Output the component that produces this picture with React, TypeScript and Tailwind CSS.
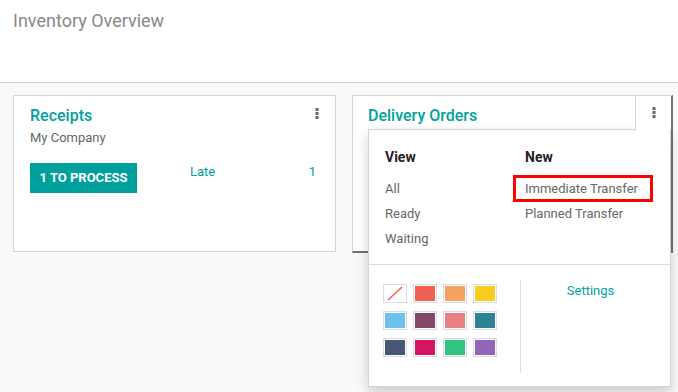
import React from "react";

const Dots = () => (
  <svg width="4" height="11" viewBox="0 0 4 11" className="block">
    <rect x="0.5" y="0" width="3" height="3" fill="#666" />
    <rect x="0.5" y="4" width="3" height="3" fill="#666" />
    <rect x="0.5" y="8" width="3" height="3" fill="#666" />
  </svg>
);

const colors = [
  "none",
  "#F06050",
  "#F4A460",
  "#F7CD1F",
  "#6CC1ED",
  "#814968",
  "#EB7E7F",
  "#2C8397",
  "#475577",
  "#D6145F",
  "#30C381",
  "#9365B8",
];

export default function App() {
  return (
    <div
      className="w-[678px] h-[392px] overflow-hidden bg-[#f9f9f9] flex flex-col"
      style={{ fontFamily: "Roboto, 'Noto Sans', sans-serif" }}
    >
      <div className="h-[83px] shrink-0 bg-white border-b border-[#cfcfcf] pl-[13px] pt-[8px]">
        <div className="text-[18px] leading-[26px] text-[#888]">Inventory Overview</div>
      </div>
      <div className="flex gap-[16px] pl-[13px] pt-[12px]">
        {/* Card 1 */}
        <div className="w-[323px] h-[157px] bg-white border border-[#d4d4d4] relative pl-[16px] pt-[9px]">
          <div className="absolute right-[16px] top-[12px]">
            <Dots />
          </div>
          <div className="text-[16px] leading-[22px] font-medium text-[#00A09D]">Receipts</div>
          <div className="text-[13px] leading-[20px] text-[#666] mt-[1px]">My Company</div>
          <div className="flex mt-[15px]">
            <div className="w-[107px] h-[30px] bg-[#00A09D] text-white text-[13px] font-bold flex items-center justify-center">
              1 TO PROCESS
            </div>
            <div className="ml-[53px] text-[13px] text-[#00A09D] leading-[18px]">Late</div>
            <div className="ml-auto mr-[19px] text-[13px] text-[#00A09D] leading-[18px]">1</div>
          </div>
        </div>
        {/* Card 2 */}
        <div className="w-[321px] h-[158px] bg-white border-t border-l border-[#d4d4d4] border-r-2 border-b-2 border-r-[#6f747c] border-b-[#6f747c] relative pl-[15px] pt-[9px]">
          <div className="text-[16px] leading-[22px] font-medium text-[#00A09D]">Delivery Orders</div>
          {/* toggle */}
          <div className="absolute right-0 top-0 w-[36px] h-[34px] bg-white border-l border-[#d4d4d4] z-20 flex justify-center pt-[11px]">
            <Dots />
          </div>
          {/* dropdown */}
          <div className="absolute left-[15px] top-[33px] w-[303px] h-[258px] bg-white border border-[#d4d4d4] shadow-[0_6px_12px_rgba(0,0,0,0.175)] z-10">
            <div className="flex h-[134px]">
              <div className="w-[140px] pl-[16px] pt-[18px]">
                <div className="text-[14px] font-bold text-[#222] leading-[18px]">View</div>
                <div className="mt-[10px] flex flex-col text-[13px] text-[#666] leading-[25px]">
                  <span>All</span>
                  <span>Ready</span>
                  <span>Waiting</span>
                </div>
              </div>
              <div className="pt-[18px]">
                <div className="text-[14px] font-bold text-[#222] leading-[18px] ml-[16px]">New</div>
                <div className="mt-[10px] flex flex-col text-[13px] text-[#666] leading-[25px]">
                  <span className="relative pl-[16px]">
                    Immediate Transfer
                    <span className="absolute left-[4px] top-[-1px] w-[140px] h-[27px] border-[3px] border-[#ff0000]"></span>
                  </span>
                  <span className="pl-[16px]">Planned Transfer</span>
                </div>
              </div>
            </div>
            <div className="border-t border-[#ddd] flex h-[122px] pt-[15px]">
              <div className="w-[152px] h-[93px] pl-[14px] pt-[4px] border-r border-[#ddd]">
                <div className="grid grid-cols-[repeat(4,24px)] gap-x-[6px] gap-y-[8px]">
                  {colors.map((c, i) => (
                    <div
                      key={i}
                      className="w-[24px] h-[19px] border border-[#d9dde3] p-[1px] bg-white"
                    >
                      {c === "none" ? (
                        <svg width="20" height="15" viewBox="0 0 20 15" className="block">
                          <line x1="3" y1="14" x2="17" y2="1" stroke="#f06050" strokeWidth="1.5" />
                        </svg>
                      ) : (
                        <div className="w-full h-full" style={{ background: c }} />
                      )}
                    </div>
                  ))}
                </div>
              </div>
              <div className="flex-1 flex justify-center pt-[2px] pr-[10px]">
                <span className="text-[13px] text-[#00A09D] leading-[18px]">Settings</span>
              </div>
            </div>
          </div>
        </div>
      </div>
    </div>
  );
}
